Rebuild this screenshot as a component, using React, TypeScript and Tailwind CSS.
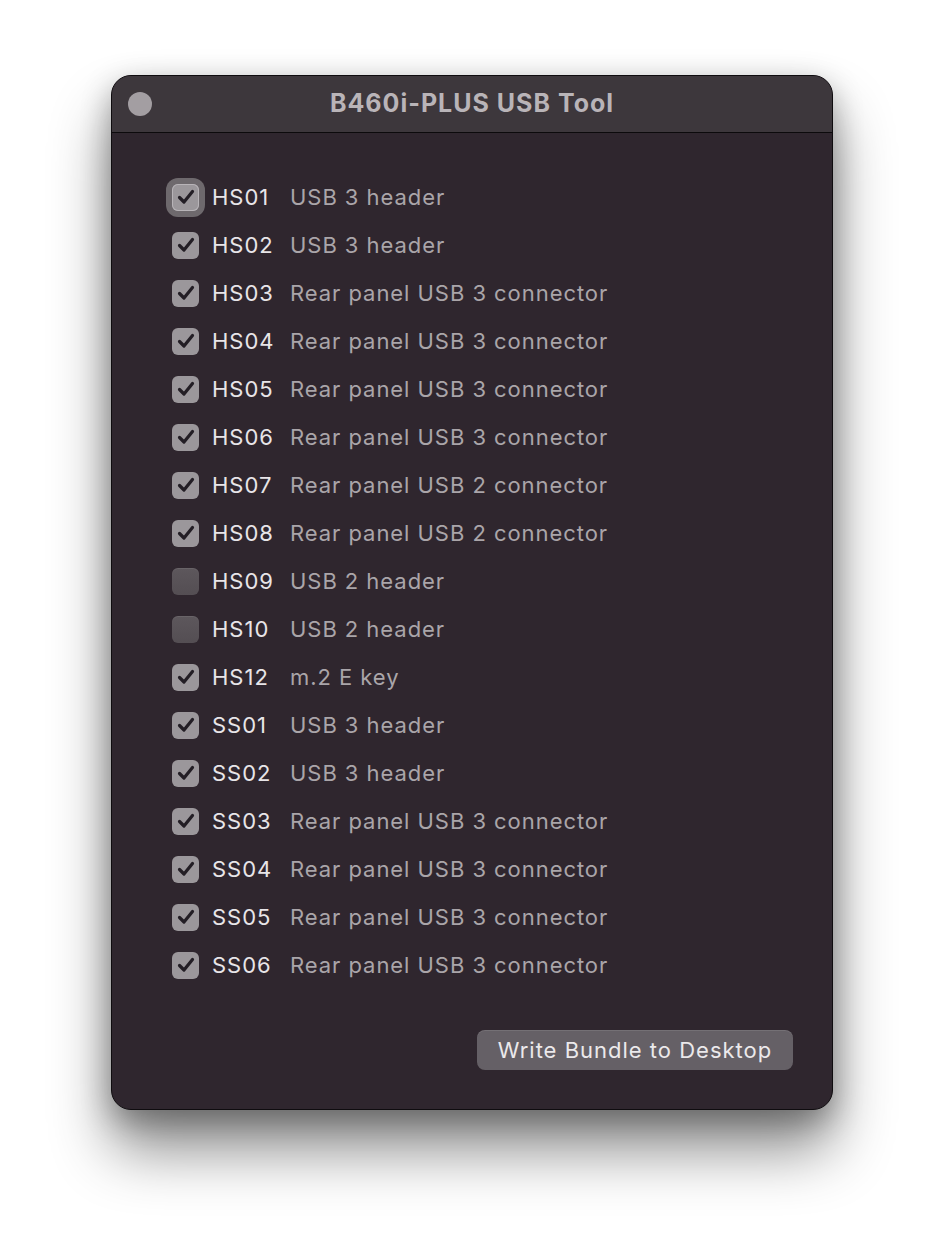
import { useState } from "react";

interface Port {
  id: string;
  label: string;
  enabled: boolean;
}

const initialPorts: Port[] = [
  { id: "HS01", label: "USB 3 header", enabled: true },
  { id: "HS02", label: "USB 3 header", enabled: true },
  { id: "HS03", label: "Rear panel USB 3 connector", enabled: true },
  { id: "HS04", label: "Rear panel USB 3 connector", enabled: true },
  { id: "HS05", label: "Rear panel USB 3 connector", enabled: true },
  { id: "HS06", label: "Rear panel USB 3 connector", enabled: true },
  { id: "HS07", label: "Rear panel USB 2 connector", enabled: true },
  { id: "HS08", label: "Rear panel USB 2 connector", enabled: true },
  { id: "HS09", label: "USB 2 header", enabled: false },
  { id: "HS10", label: "USB 2 header", enabled: false },
  { id: "HS12", label: "m.2 E key", enabled: true },
  { id: "SS01", label: "USB 3 header", enabled: true },
  { id: "SS02", label: "USB 3 header", enabled: true },
  { id: "SS03", label: "Rear panel USB 3 connector", enabled: true },
  { id: "SS04", label: "Rear panel USB 3 connector", enabled: true },
  { id: "SS05", label: "Rear panel USB 3 connector", enabled: true },
  { id: "SS06", label: "Rear panel USB 3 connector", enabled: true },
];

function Checkbox({ checked, focused, onClick }: { checked: boolean; focused?: boolean; onClick: () => void }) {
  return (
    <button
      onClick={onClick}
      className={`w-[27px] h-[27px] rounded-[6px] flex items-center justify-center shrink-0
        ${checked ? "bg-[#9b979b]" : "bg-gradient-to-b from-[#5d575c] to-[#544e53] shadow-[inset_0_1px_0_rgba(255,255,255,0.08)]"}
        ${focused ? "shadow-[0_0_0_6px_#6e696d] ring-1 ring-inset ring-[#b8b4b8]" : ""}`}
    >
      {checked && (
        <svg width="22" height="22" viewBox="0 0 22 22" fill="none">
          <path d="M4.5 11.5 L9 16 L17.5 5.5" stroke="#231e25" strokeWidth="3.2" strokeLinecap="round" strokeLinejoin="round" />
        </svg>
      )}
    </button>
  );
}

export default function App() {
  const [ports, setPorts] = useState<Port[]>(initialPorts);

  const toggle = (id: string) => {
    setPorts(prev => prev.map(p => (p.id === id ? { ...p, enabled: !p.enabled } : p)));
  };

  return (
    <div className="min-h-screen bg-white flex justify-center pt-[75px] pb-[148px] font-['Inter','Liberation_Sans',sans-serif]">
      <div className="w-[722px] rounded-[20px] bg-[#2f262e] border border-[#0f0c0f] shadow-[0_40px_60px_rgba(0,0,0,0.45),0_10px_30px_rgba(0,0,0,0.3)] overflow-hidden">
        <div className="relative h-[57px] bg-[#3d373c] border-b border-[#0c0a0c] flex items-center justify-center">
          <div className="absolute left-[16px] top-[16px] w-[24px] h-[24px] rounded-full bg-[#a39ea2]" />
          <h1 className="text-[25px] font-bold text-[#b9b4b8] tracking-[1px]">B460i-PLUS USB Tool</h1>
        </div>

        <div className="pt-[40px] pl-[60px] pr-[39px] pb-[39px]">
          <div className="flex flex-col">
            {ports.map((port, i) => (
              <div key={port.id} className="h-[48px] flex items-center">
                <Checkbox checked={port.enabled} focused={i === 0} onClick={() => toggle(port.id)} />
                <span className="ml-[13px] w-[78px] text-[22px] text-[#e8e5e8] tracking-[1px]">{port.id}</span>
                <span className="text-[22px] text-[#aaa5a9] tracking-[0.95px]">{port.label}</span>
              </div>
            ))}
          </div>

          <div className="flex justify-end mt-[41px]">
            <button className="w-[316px] h-[40px] rounded-[8px] bg-[#656066] text-[22px] text-[#ebe9eb] tracking-[1px] shadow-[inset_0_1px_0_rgba(255,255,255,0.1)]">
              Write Bundle to Desktop
            </button>
          </div>
        </div>
      </div>
    </div>
  );
}
